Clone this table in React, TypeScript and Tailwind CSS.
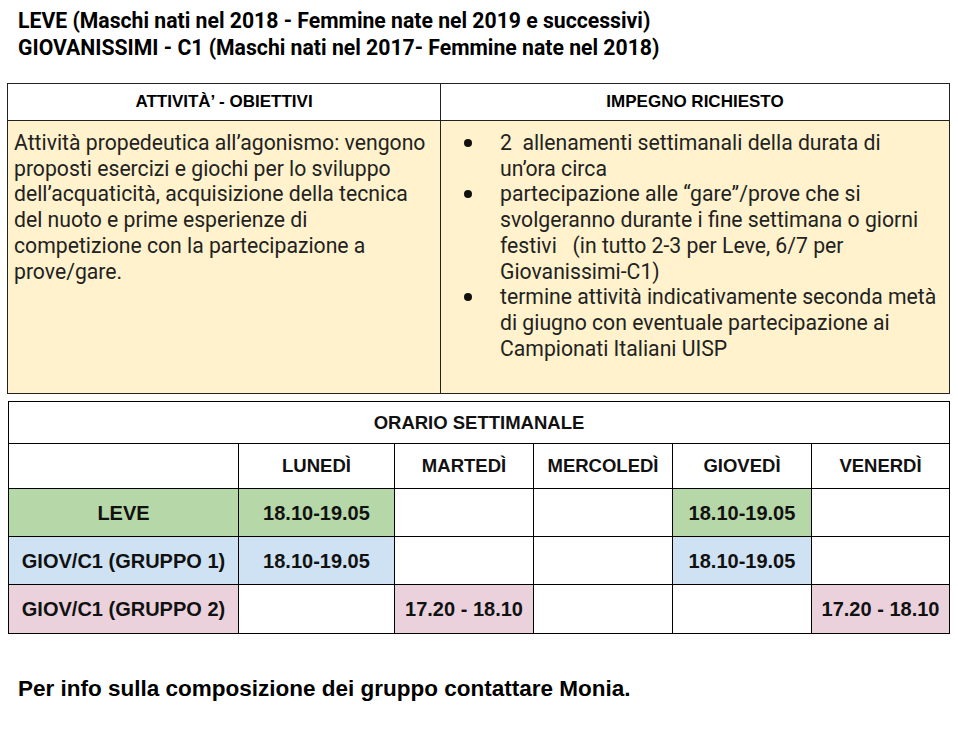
import React from 'react';

const roboto = { fontFamily: 'Roboto, "Liberation Sans", sans-serif' };
const arial = { fontFamily: '"Liberation Sans", Arial, sans-serif' };

type Cell = { text?: string; bg?: string };

const days = ['LUNEDÌ', 'MARTEDÌ', 'MERCOLEDÌ', 'GIOVEDÌ', 'VENERDÌ'];

const rows: { label: string; bg: string; cells: Cell[] }[] = [
  {
    label: 'LEVE',
    bg: 'bg-[#b6d7a8]',
    cells: [
      { text: '18.10-19.05', bg: 'bg-[#b6d7a8]' },
      {},
      {},
      { text: '18.10-19.05', bg: 'bg-[#b6d7a8]' },
      {},
    ],
  },
  {
    label: 'GIOV/C1 (GRUPPO 1)',
    bg: 'bg-[#cfe2f3]',
    cells: [
      { text: '18.10-19.05', bg: 'bg-[#cfe2f3]' },
      {},
      {},
      { text: '18.10-19.05', bg: 'bg-[#cfe2f3]' },
      {},
    ],
  },
  {
    label: 'GIOV/C1 (GRUPPO 2)',
    bg: 'bg-[#ead1dc]',
    cells: [
      {},
      { text: '17.20 - 18.10', bg: 'bg-[#ead1dc]' },
      {},
      {},
      { text: '17.20 - 18.10', bg: 'bg-[#ead1dc]' },
    ],
  },
];

const bullets = [
  ['2  allenamenti settimanali della durata di', 'un’ora circa'],
  [
    'partecipazione alle “gare”/prove che si',
    'svolgeranno durante i fine settimana o giorni',
    'festivi   (in tutto 2-3 per Leve, 6/7 per',
    'Giovanissimi-C1)',
  ],
  [
    'termine attività indicativamente seconda metà',
    'di giugno con eventuale partecipazione ai',
    'Campionati Italiani UISP',
  ],
];

function Activities() {
  return (
    <div className="ml-[7px] w-[943px] border border-[#222]" style={roboto}>
      <div
        className="grid grid-cols-[433px_1fr] h-[37px] border-b border-[#222] text-[17px] font-bold text-black"
        style={arial}
      >
        <div className="flex items-center justify-center border-r border-[#222]">
          ATTIVITÀ’ - OBIETTIVI
        </div>
        <div className="flex items-center justify-center">IMPEGNO RICHIESTO</div>
      </div>
      <div className="grid grid-cols-[433px_1fr] h-[272px] bg-[#fff2cc] text-[21.2px] leading-[25.7px] text-[#222]">
        <div className="border-r border-[#222] pl-[6px] pt-[9px]">
          Attività propedeutica all’agonismo: vengono
          <br />
          proposti esercizi e giochi per lo sviluppo
          <br />
          dell’acquaticità, acquisizione della tecnica
          <br />
          del nuoto e prime esperienze di
          <br />
          competizione con la partecipazione a
          <br />
          prove/gare.
        </div>
        <ul className="pt-[9px] pl-[20px]">
          {bullets.map((lines, i) => (
            <li key={i} className="flex">
              <span className="w-[39px] h-[25.7px] shrink-0 flex items-center">
                <span className="ml-[3px] w-[8px] h-[8px] rounded-full bg-[#111]" />
              </span>
              <span className="whitespace-pre">
                {lines.map((l, j) => (
                  <React.Fragment key={j}>
                    {j > 0 && <br />}
                    {l}
                  </React.Fragment>
                ))}
              </span>
            </li>
          ))}
        </ul>
      </div>
    </div>
  );
}

function Schedule() {
  const cols = 'grid grid-cols-[230px_156px_139px_139px_139px_1fr]';
  const cell = 'flex items-center justify-center border-r border-black last:border-r-0';
  return (
    <div
      className="mt-[7px] ml-[8px] w-[942px] border border-black text-[20px] font-bold text-[#111]"
      style={arial}
    >
      <div className="h-[42px] flex items-center justify-center border-b border-black text-[18.5px]">
        ORARIO SETTIMANALE
      </div>
      <div className={`${cols} h-[45px] border-b border-black text-[18.5px]`}>
        <div className={cell} />
        {days.map((d) => (
          <div key={d} className={cell}>
            {d}
          </div>
        ))}
      </div>
      {rows.map((r, i) => (
        <div
          key={r.label}
          className={`${cols} h-[48px] ${i < rows.length - 1 ? 'border-b border-black' : ''}`}
        >
          <div className={`${cell} ${r.bg}`}>{r.label}</div>
          {r.cells.map((c, j) => (
            <div key={j} className={`${cell} ${c.bg ?? ''}`}>
              {c.text}
            </div>
          ))}
        </div>
      ))}
    </div>
  );
}

export default function App() {
  return (
    <div className="w-[958px] h-[755px] bg-white text-black">
      <div
        className="pt-[7px] pl-[18px] text-[21.2px] leading-[27px] font-bold text-black"
        style={roboto}
      >
        <p>LEVE (Maschi nati nel 2018 - Femmine nate nel 2019 e successivi)</p>
        <p>GIOVANISSIMI - C1 (Maschi nati nel 2017- Femmine nate nel 2018)</p>
      </div>
      <div className="mt-[22px]">
        <Activities />
      </div>
      <Schedule />
      <p className="mt-[38px] pl-[18px] text-[22.5px] font-bold text-black" style={arial}>
        Per info sulla composizione dei gruppo contattare Monia.
      </p>
    </div>
  );
}
